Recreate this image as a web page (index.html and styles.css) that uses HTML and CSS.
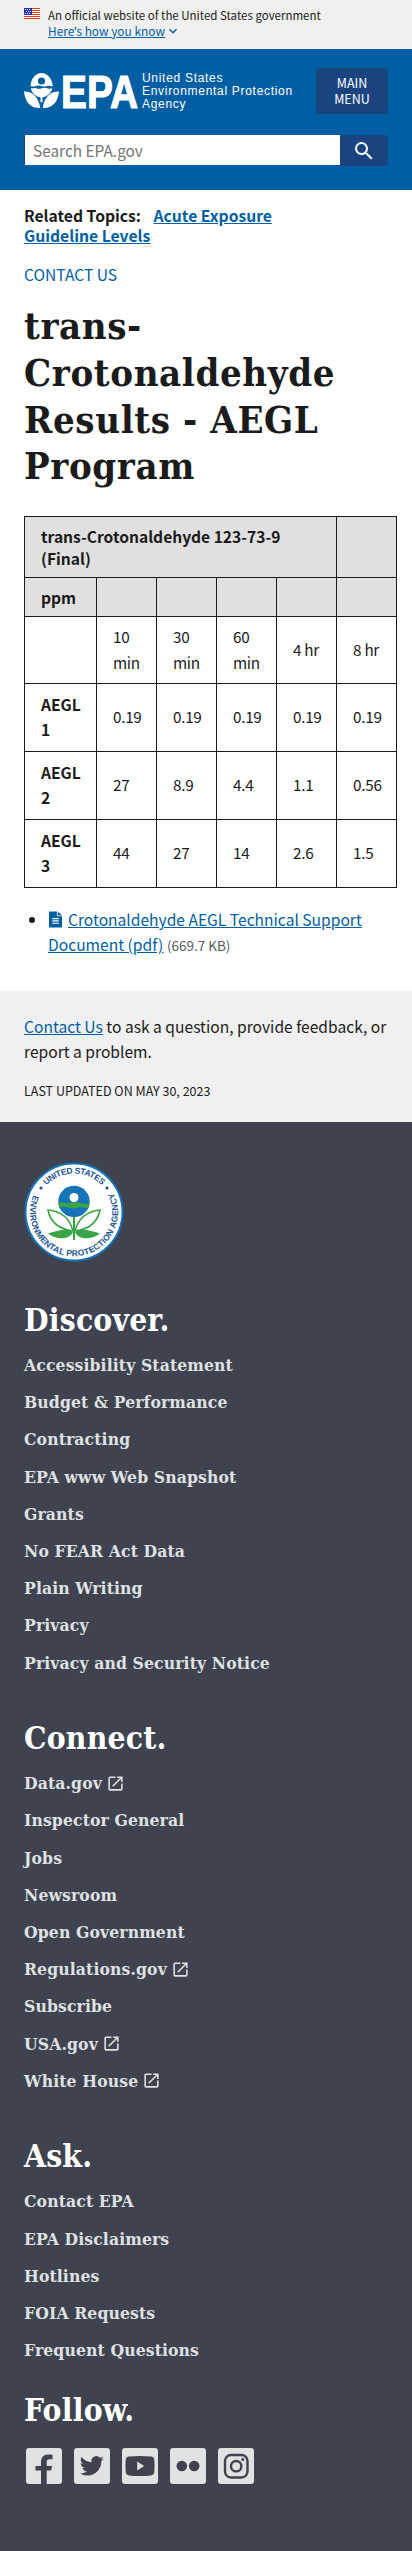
FILE: index.html
```html
<!DOCTYPE html>
<html lang="en">
<head>
<meta charset="utf-8">
<title>trans-Crotonaldehyde Results - AEGL Program | US EPA</title>
<link rel="stylesheet" href="styles.css">
</head>
<body>
<svg width="0" height="0" class="defs">
  <symbol id="launch" viewBox="0 0 24 24"><path d="M19 19H5V5h7V3H5a2 2 0 0 0-2 2v14a2 2 0 0 0 2 2h14c1.1 0 2-.9 2-2v-7h-2v7zM14 3v2h3.590l-9.830 9.830 1.410 1.410L19 6.410V10h2V3h-7z"/></symbol>
</svg>
<section class="banner">
  <svg class="flag" viewBox="0 0 16 11"><path fill="#fff" d="M0 0h16v11H0z"/><path fill="#db3e1f" d="M0 0h16v1H0zM0 2h16v1H0zM0 4h16v1H0zM0 6h16v1H0zM0 8h16v1H0zM0 10h16v1H0z"/><path fill="#1e33b1" d="M0 0h8v7H0z"/><path stroke="#fff" stroke-dasharray="1 1" d="M1 1.500h6M2 3.500h5M1 5.500h6"/></svg>
  <div class="banner-text">
    <p class="official">An official website of the United States government</p>
    <p class="how"><a href="#">Here<span class="apos">’</span>s how you know</a><svg viewBox="0 0 24 24"><path d="M16.590 8.590 12 13.170 7.410 8.590 6 10l6 6 6-6z"/></svg></p>
  </div>
</section>
<header class="header">
  <div class="header-top">
    <a class="logo" href="#">
      <svg class="mark" viewBox="0 0 114 36" fill="#fff">
        <path fill-rule="evenodd" d="M6.500 13C7 5 12 0 17.500 0S28 5 28.700 13c-2 .8-3.500-.8-5.500 0s-3.500.8-5.600 0-3.800-.8-5.600 0-3.500.8-5.500 0zM17.500 4.400a3.600 3.600 0 1 0 0 7.200 3.600 3.600 0 0 0 0-7.200z"/>
        <path d="M6.800 15.200c2 .6 3.600-.7 5.400 0s3.500.7 5.400 0 3.700-.7 5.500 0 3.400.6 5.300 0C27 20.500 23 23.800 18.500 24.200v5h-2v-5C12 23.800 8 20.500 6.800 15.200z"/>
        <path d="M0 18.500c8-.5 14.500 5 16.300 16.500C7 35.500 1 29.500 0 18.500zM35 18.500c-8-.5-14.500 5-16.300 16.500C28 35.500 34 29.500 35 18.500z"/>
        <text class="epa" x="37" y="34.500" textLength="77" lengthAdjust="spacingAndGlyphs">EPA</text>
      </svg>
      <span class="agency"><span>United States</span><span>Environmental Protection</span><span>Agency</span></span>
    </a>
    <button class="menu">MAIN<br>MENU</button>
  </div>
  <form class="search">
    <input type="text" placeholder="Search EPA.gov" aria-label="Search">
    <button type="button" aria-label="Search"><svg viewBox="0 0 24 24"><path d="M15.500 14h-.790l-.280-.270A6.471 6.471 0 0 0 16 9.500 6.500 6.500 0 1 0 9.500 16c1.610 0 3.090-.590 4.230-1.570l.270.280v.790l5 4.990L20.490 19l-4.990-5zm-6 0C7.010 14 5 11.990 5 9.500S7.010 5 9.500 5 14 7.010 14 9.500 11.990 14 9.500 14z"/></svg></button>
  </form>
</header>
<main class="main">
  <p class="related">Related Topics: <a href="#">Acute Exposure<br>Guideline Levels</a></p>
  <p class="contact"><a href="#">CONTACT US</a></p>
  <h1 class="title">trans-<br>Crotonaldehyde<br>Results - AEGL<br>Program</h1>
  <table class="data">
    <colgroup><col class="first"><col><col><col><col><col></colgroup>
    <thead>
      <tr class="r1"><th colspan="5">trans-Crotonaldehyde 123-73-9<br>(Final)</th><th></th></tr>
      <tr class="r2"><th>ppm</th><th></th><th></th><th></th><th></th><th></th></tr>
    </thead>
    <tbody>
      <tr class="r3"><td></td><td>10<br>min</td><td>30<br>min</td><td>60<br>min</td><td>4 hr</td><td>8 hr</td></tr>
      <tr><th>AEGL<br>1</th><td>0.19</td><td>0.19</td><td>0.19</td><td>0.19</td><td>0.19</td></tr>
      <tr><th>AEGL<br>2</th><td>27</td><td>8.9</td><td>4.4</td><td>1.1</td><td>0.56</td></tr>
      <tr><th>AEGL<br>3</th><td>44</td><td>27</td><td>14</td><td>2.6</td><td>1.5</td></tr>
    </tbody>
  </table>
  <ul class="docs">
    <li><svg class="file" viewBox="0 0 14 17"><path fill="#005ea2" d="M0 0h8.500v5H14v12H0z"/><path fill="#005ea2" d="M9.500 0 14 4.200H9.500z"/><path stroke="#fff" stroke-width="1.200" d="M3.500 7.500h7M3.500 10h7M3.500 12.500h7"/></svg><a href="#">Crotonaldehyde AEGL Technical Support<br>Document (pdf)</a> <span class="size">(669.7 KB)</span></li>
  </ul>
</main>
<section class="ask-box">
  <p><a href="#">Contact Us</a> to ask a question, provide feedback, or<br>report a problem.</p>
  <p class="updated">LAST UPDATED ON MAY 30, 2023</p>
</section>
<footer class="footer">
  <svg class="seal" viewBox="0 0 100 100">
    <circle cx="50" cy="50" r="48.500" fill="#fff" stroke="#1673b8" stroke-width="2"/>
    <path id="arc-top" fill="none" d="M11.500 50a38.500 38.500 0 0 1 77 0"/>
    <path id="arc-bottom" fill="none" d="M12 28A44 44 0 1 0 88 28"/>
    <g class="seal-text"><text><textPath href="#arc-top" startOffset="50%" text-anchor="middle" textLength="62">UNITED STATES</textPath></text>
    <text><textPath href="#arc-bottom" startOffset="3%" textLength="176">ENVIRONMENTAL PROTECTION AGENCY</textPath></text></g>
    <circle cx="17" cy="26" r="1.600" fill="#205493"/><circle cx="83" cy="26" r="1.600" fill="#205493"/>
    <circle cx="50" cy="39.500" r="15.700" fill="#1673b8"/>
    <path fill="#3aa546" d="M34.300 41c4-2 7 1.500 11 0s7-1 10 0 6.500 1.200 10.300 0l-.8 4.500c-4 1.500-6.400-1-10.200 0s-6 1.500-10 0-6-.5-9.400 0z"/>
    <circle cx="50" cy="35.500" r="4.500" fill="#fff"/>
    <path stroke="#3aa546" stroke-width="2" d="M50 55v23"/>
    <path fill="#fff" stroke="#3aa546" stroke-width="1.600" d="M49 69C45 54 35 49 24 48c2 10 9 19 25 21zM51 69c4-15 14-20 25-21-2 10-9 19-25 21z"/>
    <path fill="#3aa546" d="M49 70.500c-5-5-15-2-25 1 7 5.500 20 7.500 25-1zM51 70.500c5-5 15-2 25 1-7 5.500-20 7.500-25-1z"/>
  </svg>
  <nav class="group first-group">
    <h2>Discover.</h2>
    <ul>
      <li><a href="#">Accessibility Statement</a></li>
      <li><a href="#">Budget &amp; Performance</a></li>
      <li><a href="#">Contracting</a></li>
      <li><a href="#">EPA www Web Snapshot</a></li>
      <li><a href="#">Grants</a></li>
      <li><a href="#">No FEAR Act Data</a></li>
      <li><a href="#">Plain Writing</a></li>
      <li><a href="#">Privacy</a></li>
      <li><a href="#">Privacy and Security Notice</a></li>
    </ul>
  </nav>
  <nav class="group">
    <h2>Connect.</h2>
    <ul>
      <li><a href="#">Data.gov</a><svg><use href="#launch"/></svg></li>
      <li><a href="#">Inspector General</a></li>
      <li><a href="#">Jobs</a></li>
      <li><a href="#">Newsroom</a></li>
      <li><a href="#">Open Government</a></li>
      <li><a href="#">Regulations.gov</a><svg><use href="#launch"/></svg></li>
      <li><a href="#">Subscribe</a></li>
      <li><a href="#">USA.gov</a><svg><use href="#launch"/></svg></li>
      <li><a href="#">White House</a><svg><use href="#launch"/></svg></li>
    </ul>
  </nav>
  <nav class="group">
    <h2>Ask.</h2>
    <ul>
      <li><a href="#">Contact EPA</a></li>
      <li><a href="#">EPA Disclaimers</a></li>
      <li><a href="#">Hotlines</a></li>
      <li><a href="#">FOIA Requests</a></li>
      <li><a href="#">Frequent Questions</a></li>
    </ul>
  </nav>
  <div class="group follow">
    <h2>Follow.</h2>
    <div class="social">
      <svg viewBox="0 0 36 36"><rect width="36" height="36" rx="3"/><path class="ink" d="M15 36V22.500H9.500V18H15v-4c0-5 3-7.500 7.500-7.500 1.800 0 3 .1 4 .3v4.500h-2.800c-2.400 0-3 1.200-3 2.900V18H26l-.8 4.500h-4.500V36z"/></svg>
      <svg viewBox="0 0 36 36"><rect width="36" height="36" rx="3"/><path class="ink" transform="translate(5.800 5.800)" d="M24 4.600a10 10 0 0 1-2.800.8 4.900 4.900 0 0 0 2.100-2.700 10 10 0 0 1-3.100 1.200 4.900 4.900 0 0 0-8.400 4.500A14 14 0 0 1 1.700 3.200a4.900 4.900 0 0 0 1.500 6.500 4.900 4.900 0 0 1-2.200-.6v.1a4.900 4.900 0 0 0 3.900 4.800 4.900 4.900 0 0 1-2.200.1 4.900 4.900 0 0 0 4.600 3.400A9.900 9.900 0 0 1 0 19.500 14 14 0 0 0 7.500 21.700c9.100 0 14-7.500 14-14v-.6A10 10 0 0 0 24 4.600z"/></svg>
      <svg viewBox="0 0 36 36"><rect width="36" height="36" rx="3"/><path class="ink" d="M7 8.500q11-1.200 22 0 3 .3 3.300 3.500.5 6 0 12-.3 3-3.300 3.400-11 1-22 0-3-.4-3.300-3.400-.5-6 0-12 .3-3.200 3.300-3.500z"/><path d="M15.200 13.500v9l7-4.500z"/></svg>
      <svg viewBox="0 0 36 36"><rect width="36" height="36" rx="3"/><circle class="ink" cx="11.800" cy="18" r="5.300"/><circle class="ink" cx="24.200" cy="18" r="5.300"/></svg>
      <svg viewBox="0 0 36 36"><rect width="36" height="36" rx="3"/><rect class="line" x="7" y="7" width="22.500" height="22.500" rx="6"/><circle class="line" cx="18.200" cy="18.200" r="5.200"/><circle class="ink" cx="24.800" cy="11.500" r="1.500"/></svg>
    </div>
  </div>
</footer>
</body>
</html>
```
FILE: styles.css
```css
* { box-sizing: border-box; }
body, p, h1, h2, ul { margin: 0; padding: 0; }
body {
  width: 412px;
  background: #fff;
  color: #1b1b1b;
  font-family: "Noto Sans CJK SC", "Noto Sans", sans-serif;
  font-size: 15.600px;
}
svg { display: block; flex: none; }
a { color: #005ea2; }
.defs { position: absolute; }

.banner { display: flex; gap: 8px; height: 49px; padding: 7px 24px 0; background: #f0f0f0; }
.flag { width: 16px; height: 11px; margin-top: 1px; }
.banner-text { font-size: 11.500px; line-height: 16px; white-space: nowrap; }
.how { display: flex; align-items: center; height: 16px; font-size: 11.900px; }
.how svg { width: 16px; height: 16px; fill: #005ea2; }
.apos { font-family: "Noto Sans", sans-serif; }

.header { height: 141px; padding: 19px 24px 0; background: #005ea2; }
.header-top { display: flex; justify-content: space-between; }
.logo { display: flex; gap: 4px; padding-top: 5px; color: #fff; text-decoration: none; }
.mark { width: 114px; height: 36px; overflow: visible; }
.epa { font: bold 47px "Liberation Sans", sans-serif; stroke: #fff; stroke-width: 1.2px; }
.agency { display: flex; flex-direction: column; margin-top: -1px; font: 12px/13px "Liberation Sans", sans-serif; letter-spacing: .7px; white-space: nowrap; }
.menu { width: 72px; height: 46px; padding: 0; border: 0; border-radius: 4px; background: #1a4480; color: #fff; font: 12.500px/16px "Noto Sans CJK SC", sans-serif; }
.search { display: flex; margin-top: 21px; }
.search input { width: 316px; height: 30px; padding: 0 8px; border: 0; border-left: 1px solid #1a4480; background: #fff; font: 15.400px "Noto Sans CJK SC", sans-serif; }
.search input::placeholder { color: #757575; }
.search button { display: flex; align-items: center; justify-content: center; width: 48px; height: 31px; padding: 0; border: 0; border-radius: 0 4px 4px 0; background: #1a4480; }
.search svg { width: 24px; height: 24px; fill: #fff; }

.main { height: 801px; padding: 16px 15px 0 24px; }
.related { font-size: 15.700px; font-weight: bold; line-height: 20px; white-space: nowrap; }
.related a { margin-left: 9px; }
.contact { margin-top: 16px; line-height: 24px; }
.contact a { text-decoration: none; }
.title { margin-top: 17px; font: bold 38px/46.8px "DejaVu Serif Condensed", "DejaVu Serif", serif; font-stretch: condensed; letter-spacing: .600px; white-space: nowrap; }
.data { width: 373px; margin-top: 26px; table-layout: fixed; border-collapse: collapse; line-height: 25.500px; }
.data col { width: 60px; }
.data .first { width: 72px; }
.data th, .data td { padding: 0 0 0 16px; border: 1px solid #1b1b1b; text-align: left; white-space: nowrap; }
.data td { padding-bottom: 1px; font-size: 15.300px; letter-spacing: -.300px; }
.data tbody th { padding-bottom: 1px; }
.data tr { height: 68px; }
.data thead { background: #e0e0e0; line-height: 22px; }
.data .r1 { height: 61px; }
.data .r2 { height: 39px; }
.data .r3 { height: 67px; }
.docs { margin-top: 19px; padding-left: 24px; line-height: 25px; white-space: nowrap; }
.file { display: inline-block; width: 13px; height: 17px; margin: 0 6px 0 1px; vertical-align: -2px; }
.size { color: #565c65; font-size: 13.500px; }

.ask-box { height: 131px; padding: 23px 24px 0; background: #f0f0f0; line-height: 25px; white-space: nowrap; }
.updated { margin-top: 14px; font-size: 12.500px; }

.footer { height: 1429px; padding: 40px 24px 0; background: #3e434f; color: #fff; }
.seal { width: 100px; height: 100px; }
.seal-text { fill: #205493; font: bold 8.500px "Liberation Sans", sans-serif; }
.group { margin-top: 37px; font-family: "DejaVu Serif Condensed", "DejaVu Serif", serif; font-stretch: condensed; font-weight: bold; white-space: nowrap; }
.first-group { margin-top: 38px; }
.group h2 { font-size: 31.500px; line-height: 40px; letter-spacing: .200px; }
.group ul { padding-top: 6.500px; list-style: none; }
.group li { display: flex; align-items: center; gap: 4px; height: 37.200px; font-size: 17.400px; letter-spacing: .120px; }
.group a { color: #dfe1e2; text-decoration: none; }
.group li svg { width: 19px; height: 19px; fill: #dfe1e2; }
.follow { margin-top: 21px; }
.social { display: flex; gap: 12px; padding: 18px 2px; fill: #dfe1e2; }
.social svg { width: 36px; height: 36px; }
.social .ink { fill: #3e434f; }
.social .line { fill: none; stroke: #3e434f; stroke-width: 2.400px; }
```
